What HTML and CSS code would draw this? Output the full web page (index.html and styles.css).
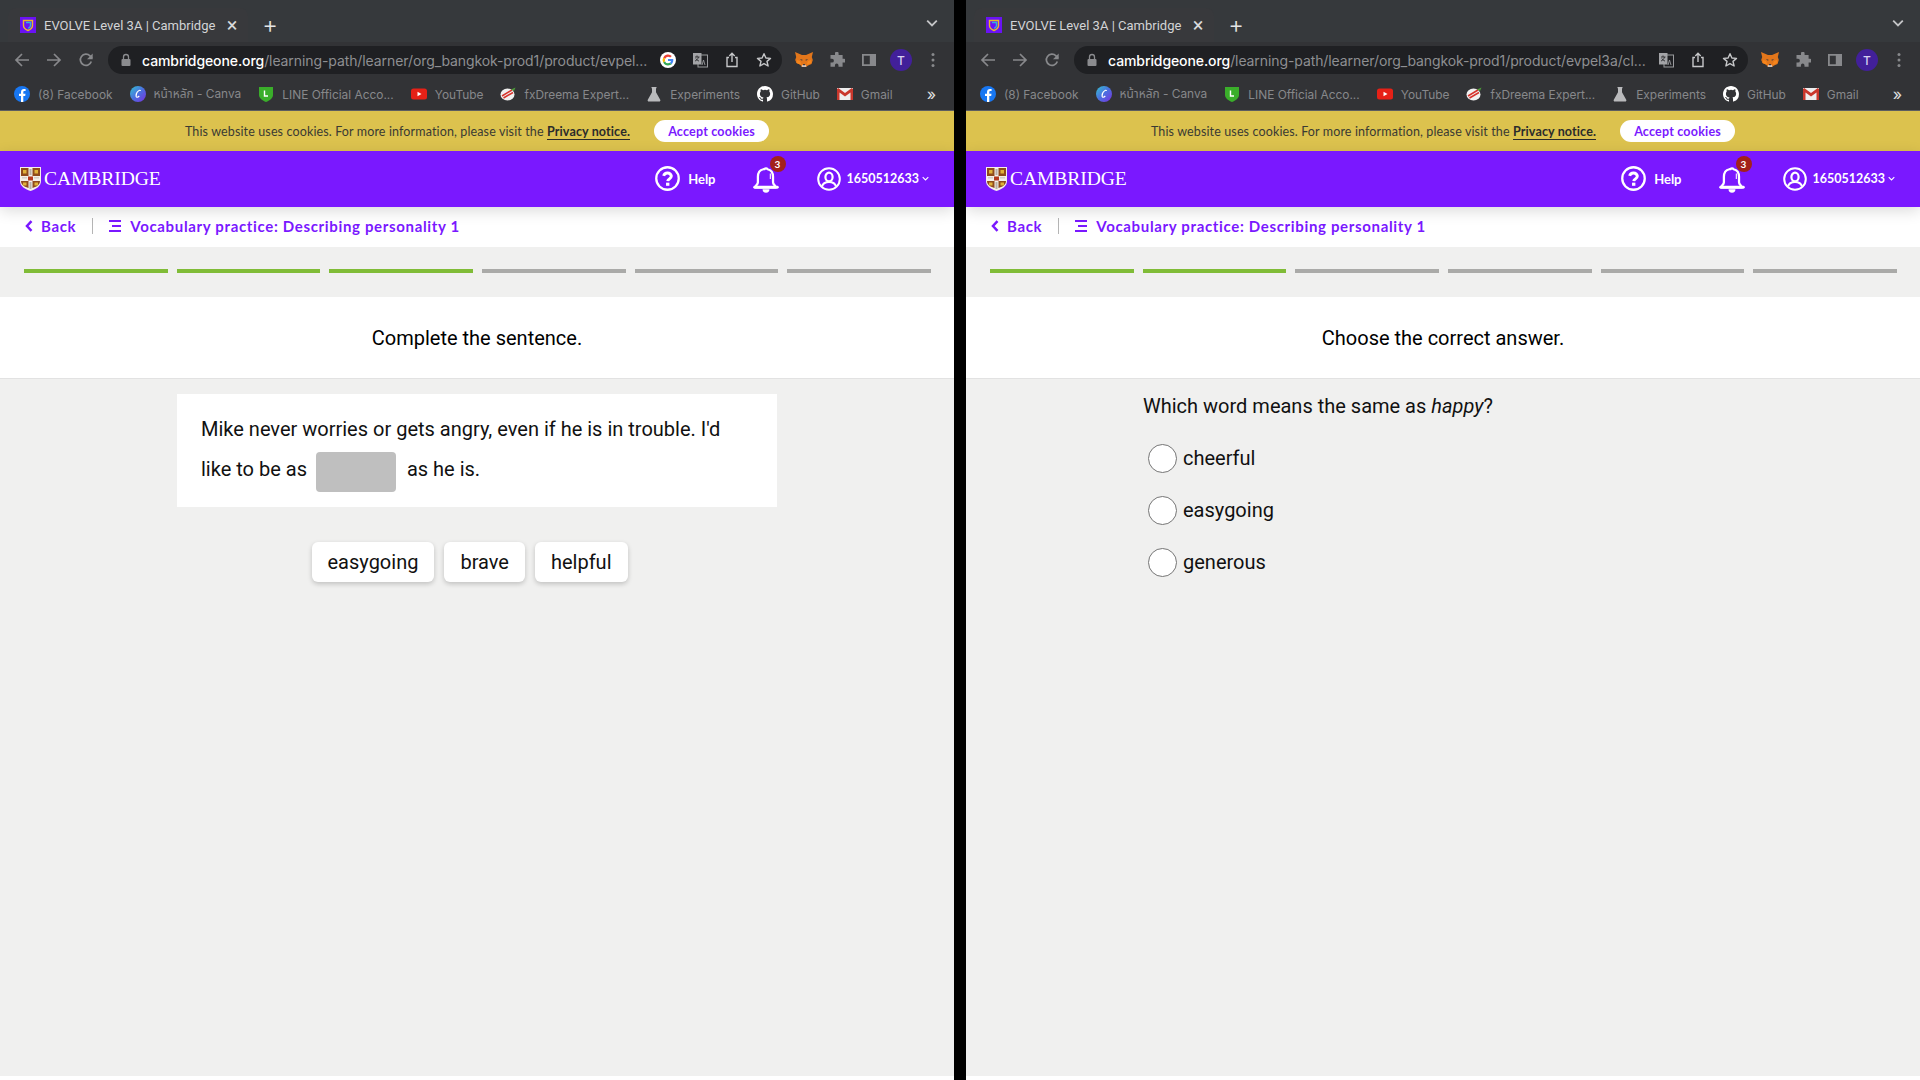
FILE: index.html
```html
<!DOCTYPE html>
<html lang="en">
<head>
<meta charset="utf-8">
<title>EVOLVE Level 3A | Cambridge One</title>
<link rel="stylesheet" href="styles.css">
</head>
<body>
<svg class="sprite" width="0" height="0" aria-hidden="true">
  <defs>
    <symbol id="favicon" viewBox="0 0 16 16">
      <rect width="16" height="16" fill="#6a12f5"/>
      <path d="M3.5 3.5h9v5c0 2.5-2 4-4.5 5-2.500-1-4.500-2.500-4.500-5z" fill="none" stroke="#e8b92c" stroke-width="1.400"/>
      <path d="M6 5.500h4.500v3c0 1.300-1 2.200-2.300 2.800" fill="none" stroke="#2fb6d8" stroke-width="1.400"/>
    </symbol>
    <symbol id="back" viewBox="0 0 16 16"><path d="M15 8H2M8 2 2 8l6 6" fill="none" stroke="currentColor" stroke-width="1.700"/></symbol>
    <symbol id="forward" viewBox="0 0 16 16"><path d="M1 8h13M8 2l6 6-6 6" fill="none" stroke="currentColor" stroke-width="1.700"/></symbol>
    <symbol id="reload" viewBox="0 0 16 16"><path d="M13.300 9.500A5.600 5.600 0 1 1 12 3.900L14 6" fill="none" stroke="currentColor" stroke-width="1.700"/><path d="M14.700 1.500v5.700H9z" fill="currentColor"/></symbol>
    <symbol id="lock" viewBox="0 0 12 14"><path d="M3.500 6V4a2.500 2.500 0 0 1 5 0v2" fill="none" stroke="currentColor" stroke-width="1.300"/><rect x="1.500" y="6" width="9" height="7" rx="1" fill="currentColor"/></symbol>
    <symbol id="google" viewBox="0 0 16 16">
      <circle cx="8" cy="8" r="8" fill="#fff"/>
      <path d="M8 4.700c.9 0 1.600.3 2.200.9l1.600-1.600A5.400 5.400 0 0 0 3.200 5.600l1.900 1.500A3.100 3.100 0 0 1 8 4.700z" fill="#e94235"/>
      <path d="M13.300 8.100c0-.4 0-.7-.1-1H8v2h3a2.600 2.600 0 0 1-1.100 1.700l1.800 1.400c1-1 1.600-2.400 1.600-4.100z" fill="#4285f4"/>
      <path d="M5.100 8.900 3.200 10.400A5.400 5.400 0 0 0 8 13.400c1.500 0 2.700-.5 3.700-1.200l-1.800-1.400c-.5.300-1.100.5-1.900.5a3.100 3.100 0 0 1-2.900-1.900z" fill="#34a853"/>
      <path d="M5.100 8.900a3.200 3.200 0 0 1 0-1.800L3.200 5.600a5.400 5.400 0 0 0 0 4.800z" fill="#fbbc05"/>
    </symbol>
    <symbol id="translate" viewBox="0 0 16 16">
      <rect x="6" y="3" width="9.500" height="12" fill="none" stroke="#9a9b9e" stroke-width="1"/>
      <path d="M1 1h8.500v11.500H1z" fill="#a3a4a7"/>
      <path d="M3 5h4.500M5 3.500V5M6.500 5c-.5 2-2 3.500-3.500 4M3.800 6.500c.7 1.200 1.800 2.100 3.200 2.600" stroke="#2a2b2e" stroke-width=".9" fill="none"/>
      <path d="M10 13l1.500-5 1.500 5" stroke="#9a9b9e" stroke-width=".9" fill="none"/>
    </symbol>
    <symbol id="share" viewBox="0 0 16 16"><path d="M5 5.500H3v9h10v-9h-2" fill="none" stroke="currentColor" stroke-width="1.400"/><path d="M8 10V1.500M5.300 4 8 1.300 10.700 4" fill="none" stroke="currentColor" stroke-width="1.400"/></symbol>
    <symbol id="star" viewBox="0 0 16 16"><path d="m8 1.700 1.900 4.300 4.600.4-3.500 3 1.100 4.600L8 11.600 3.900 14 5 9.400l-3.500-3 4.600-.4z" fill="none" stroke="currentColor" stroke-width="1.400" stroke-linejoin="round"/></symbol>
    <symbol id="fox" viewBox="0 0 18 16">
      <path d="M0 0l7 3h4l7-3-1.200 5 1 3-1.300 4-3.500 1.500L11 15H7l-2-2.500L1.500 11 .2 8l1-3z" fill="#e2761b"/>
      <path d="M2 8l3 1 1.500 3.500L5 12.500 1.500 11zM16 8l-3 1-1.500 3.500 1.500 0 3.500-1.500z" fill="#f6851b"/>
      <path d="M6.500 8.500 5 7l3 1zM11.500 8.500 13 7l-3 1z" fill="#233447"/>
      <path d="M7 13h4l.3 2H6.700z" fill="#d7c1b3"/>
      <path d="M8 12h2l-.3 1.200H8.300z" fill="#233447"/>
    </symbol>
    <symbol id="puzzle" viewBox="0 0 16 16"><path d="M6 1.500a1.800 1.800 0 0 1 3.600 0V3h4v3.800H15a1.900 1.900 0 0 1 0 3.800h-1.400v4.200H9.500V13.400a1.800 1.800 0 0 0-3.600 0v1.400H1.500v-4.200H3a1.900 1.900 0 0 0 0-3.800H1.500V3H6z" fill="currentColor"/></symbol>
    <symbol id="sidebar" viewBox="0 0 16 16"><path d="M1 2h14v12H1zM2.800 3.800v8.400h6V3.800z" fill="currentColor" fill-rule="evenodd"/></symbol>
    <symbol id="dots" viewBox="0 0 4 16"><circle cx="2" cy="2.500" r="1.500" fill="currentColor"/><circle cx="2" cy="8" r="1.500" fill="currentColor"/><circle cx="2" cy="13.500" r="1.500" fill="currentColor"/></symbol>
    <symbol id="fb" viewBox="0 0 16 16"><circle cx="8" cy="8" r="8" fill="#1877f2"/><path d="M7 16V10H5V7.700h2V6c0-2 1.200-3 3-3l1.600.1v2h-1c-1 0-1.300.5-1.300 1.200v1.400h2.200L11.200 10H9.300v6z" fill="#fff"/></symbol>
    <symbol id="canva" viewBox="0 0 16 16"><defs><linearGradient id="cv" x1="0" y1="0" x2="1" y2="1"><stop offset="0" stop-color="#35c3d0"/><stop offset=".5" stop-color="#4b6fe0"/><stop offset="1" stop-color="#7b2fe0"/></linearGradient></defs><circle cx="8" cy="8" r="8" fill="url(#cv)"/><path d="M10.500 5c-.2-1-1.200-.8-2-.1C7 6 5.800 8.500 6.100 10.300c.2 1.300 1.700 1.200 3.200-.3" fill="none" stroke="#fff" stroke-width="1.100"/></symbol>
    <symbol id="line" viewBox="0 0 14 16"><path d="M0 1h14v8c0 3.500-3.500 5.500-7 7-3.500-1.500-7-3.500-7-7z" fill="#3aae2a"/><path d="M5.500 4.500v5.500h3.500" fill="none" stroke="#fff" stroke-width="1.400"/></symbol>
    <symbol id="yt" viewBox="0 0 16 12"><rect width="16" height="11" y=".5" rx="2.500" fill="#e62117"/><path d="M6.500 3.700v4.600L10.500 6z" fill="#fff"/></symbol>
    <symbol id="fx" viewBox="0 0 16 16"><ellipse cx="7.500" cy="8.500" rx="7" ry="6" fill="#f1f1f1"/><path d="M2 10 12 4M3.500 12 13 6.500" stroke="#d6332c" stroke-width="1.500"/><path d="M11 3.500 15.500 1.500 14 5z" fill="#4c9a3a"/></symbol>
    <symbol id="flask" viewBox="0 0 14 16"><path d="M4.500 1h5v1.200H9v4L13.500 14.200 12.800 15.500H1.200L.5 14.200 5 6.200v-4h-.5z" fill="#b9babc"/></symbol>
    <symbol id="github" viewBox="0 0 16 16"><path fill="#fff" d="M8 0C3.580 0 0 3.580 0 8c0 3.540 2.290 6.530 5.470 7.590.4.070.55-.17.55-.38 0-.19-.01-.82-.01-1.490-2.010.37-2.530-.49-2.690-.94-.09-.23-.48-.94-.82-1.130-.28-.15-.68-.52-.01-.53.63-.01 1.080.58 1.230.82.720 1.210 1.870.870 2.330.660.070-.520.280-.870.510-1.070-1.780-.2-3.640-.89-3.640-3.950 0-.870.310-1.590.820-2.150-.08-.2-.36-1.020.08-2.120 0 0 .67-.21 2.200.82a7.420 7.420 0 0 1 4 0c1.530-1.040 2.200-.82 2.200-.82.44 1.100.16 1.920.08 2.120.51.560.82 1.270.82 2.150 0 3.070-1.870 3.750-3.650 3.950.29.250.54.730.54 1.480 0 1.070-.01 1.930-.01 2.200 0 .21.150.46.550.38A8.010 8.010 0 0 0 16 8c0-4.420-3.580-8-8-8z"/></symbol>
    <symbol id="gmail" viewBox="0 0 16 12"><rect width="16" height="12" fill="#eee"/><path d="M0 1v11h2.500V4.500L8 8.500l5.500-4V12H16V1l-1.200-1L8 5 1.200 0z" fill="#c9372c"/></symbol>
    <symbol id="shield" viewBox="0 0 21 24">
      <path d="M0 0h21v14c0 5-4.500 8-10.500 10C4.500 22 0 19 0 14z" fill="#f4efe9"/>
      <path d="M1 1h7.500v8H1zM12.500 1H20v8h-7.500zM1 14h7.500v7C5 20 1 18 1 14zM12.500 14H20c0 4-4 6-7.500 7z" fill="#8f4a1c"/>
      <path d="M3 3h3.500v3.500H3zM14.500 3H18v3.500h-3.500zM3 15.500h3.500v3H3zM14.500 15.500H18v3h-3.500z" fill="#e0b13a"/>
      <path d="M8 9.500h5V13.500H8z" fill="#b5391f"/>
      <path d="M9.500 2h2v6h-2zM2 10.500h5v.8H2zM14 10.500h5v.8h-5zM9.500 15h2v7h-2z" fill="#b8b0a8"/>
    </symbol>
    <symbol id="help" viewBox="0 0 24 24"><circle cx="12" cy="12" r="10.800" fill="none" stroke="currentColor" stroke-width="2.200"/><path d="M8.300 9.500a3.800 3.800 0 0 1 7.400.2c0 2.500-3.200 2.600-3.500 4.800" fill="none" stroke="currentColor" stroke-width="2.800"/><rect x="10.600" y="16" width="3.200" height="3" fill="currentColor"/></symbol>
    <symbol id="bell" viewBox="0 0 24 25"><path d="M10.600 3a1.600 1.600 0 0 1 2.800 0c3.700.8 5.100 3.700 5.100 7v5c0 2.300 2.500 3.300 2.500 4.800H2c0-1.500 2.500-2.500 2.500-4.800v-5c0-3.300 1.400-6.200 5.100-7z" fill="none" stroke="currentColor" stroke-width="2.100" stroke-linejoin="round"/><path d="M1.500 19.700h21" stroke="currentColor" stroke-width="2.600" stroke-linecap="round"/><path d="M8.800 21.500a3.200 3.200 0 0 0 6.400 0z" fill="currentColor"/><path d="M16 7v5" stroke="currentColor" stroke-width="1"/></symbol>
    <symbol id="user" viewBox="0 0 24 24"><circle cx="12" cy="12" r="10.800" fill="none" stroke="currentColor" stroke-width="2"/><ellipse cx="12" cy="10" rx="3.600" ry="4.300" fill="none" stroke="currentColor" stroke-width="2.200"/><path d="M5 19.500c1-3.500 3.500-4.500 7-4.500s6 1 7 4.500" fill="none" stroke="currentColor" stroke-width="2.200"/></symbol>
    <symbol id="chev" viewBox="0 0 10 6"><path d="M1 1l4 4 4-4" fill="none" stroke="currentColor" stroke-width="1.500"/></symbol>
    <symbol id="chevleft" viewBox="0 0 8 12"><path d="M6.500 1.200 2 6l4.500 4.800" fill="none" stroke="currentColor" stroke-width="2.500"/></symbol>
    <symbol id="list" viewBox="0 0 12 12"><path d="M0 1h12M3 6h9M0 11h12" stroke="currentColor" stroke-width="2"/></symbol>
  </defs>
</svg>

<main class="screen">
  <section class="pane">
    <div class="tabstrip">
      <div class="tab">
        <svg class="fav"><use href="#favicon"/></svg>
        <span class="tab-title">EVOLVE Level 3A | Cambridge</span>
        <span class="tab-close">×</span>
      </div>
      <span class="tab-new">+</span>
      <svg class="tab-menu"><use href="#chev"/></svg>
    </div>
    <div class="toolbar">
      <svg class="tool nav-first"><use href="#back"/></svg>
      <svg class="tool"><use href="#forward"/></svg>
      <svg class="tool"><use href="#reload"/></svg>
      <div class="omnibox">
        <svg class="lock"><use href="#lock"/></svg>
        <span class="url"><b>cambridgeone.org</b>/learning-path/learner/org_bangkok-prod1/product/evpel...</span>
        <svg class="omni-icon"><use href="#google"/></svg>
        <svg class="omni-icon"><use href="#translate"/></svg>
        <svg class="omni-icon"><use href="#share"/></svg>
        <svg class="omni-icon"><use href="#star"/></svg>
      </div>
      <svg class="ext fox"><use href="#fox"/></svg>
      <svg class="ext"><use href="#puzzle"/></svg>
      <svg class="ext"><use href="#sidebar"/></svg>
      <span class="avatar">T</span>
      <svg class="dots"><use href="#dots"/></svg>
    </div>
    <div class="bookmarks">
      <span class="bm"><svg><use href="#fb"/></svg>(8) Facebook</span>
      <span class="bm"><svg><use href="#canva"/></svg>หน้าหลัก - Canva</span>
      <span class="bm"><svg><use href="#line"/></svg>LINE Official Acco...</span>
      <span class="bm"><svg><use href="#yt"/></svg>YouTube</span>
      <span class="bm"><svg><use href="#fx"/></svg>fxDreema Expert...</span>
      <span class="bm"><svg><use href="#flask"/></svg>Experiments</span>
      <span class="bm"><svg><use href="#github"/></svg>GitHub</span>
      <span class="bm"><svg><use href="#gmail"/></svg>Gmail</span>
      <span class="bm-more">»</span>
    </div>
    <div class="cookie">
      <p>This website uses cookies. For more information, please visit the <a>Privacy notice.</a></p>
      <button class="accept">Accept cookies</button>
    </div>
    <header class="brand">
      <svg class="shield"><use href="#shield"/></svg>
      <span class="wordmark">CAMBRIDGE</span>
      <span class="help"><svg><use href="#help"/></svg>Help</span>
      <span class="bell"><svg><use href="#bell"/></svg><i class="badge">3</i></span>
      <span class="account"><svg><use href="#user"/></svg>1650512633<svg class="acc-chev"><use href="#chev"/></svg></span>
    </header>
    <nav class="crumbs">
      <svg class="c-back"><use href="#chevleft"/></svg><span class="c-label">Back</span>
      <span class="c-sep"></span>
      <svg class="c-list"><use href="#list"/></svg><span class="c-title">Vocabulary practice: Describing personality 1</span>
    </nav>
    <div class="progress">
      <span class="seg done"></span><span class="seg done"></span><span class="seg done"></span><span class="seg"></span><span class="seg"></span><span class="seg"></span>
    </div>
    <h1 class="prompt">Complete the sentence.</h1>
    <div class="content">
      <div class="column">
        <div class="card">Mike never worries or gets angry, even if he is in trouble. I'd like to be as <span class="blank"></span> as he is.</div>
        <div class="chips">
          <span class="chip">easygoing</span><span class="chip">brave</span><span class="chip">helpful</span>
        </div>
      </div>
    </div>
    <div class="foot"></div>
  </section>

  <section class="pane">
    <div class="tabstrip">
      <div class="tab">
        <svg class="fav"><use href="#favicon"/></svg>
        <span class="tab-title">EVOLVE Level 3A | Cambridge</span>
        <span class="tab-close">×</span>
      </div>
      <span class="tab-new">+</span>
      <svg class="tab-menu"><use href="#chev"/></svg>
    </div>
    <div class="toolbar">
      <svg class="tool nav-first"><use href="#back"/></svg>
      <svg class="tool"><use href="#forward"/></svg>
      <svg class="tool"><use href="#reload"/></svg>
      <div class="omnibox">
        <svg class="lock"><use href="#lock"/></svg>
        <span class="url"><b>cambridgeone.org</b>/learning-path/learner/org_bangkok-prod1/product/evpel3a/cl...</span>
        <svg class="omni-icon"><use href="#translate"/></svg>
        <svg class="omni-icon"><use href="#share"/></svg>
        <svg class="omni-icon"><use href="#star"/></svg>
      </div>
      <svg class="ext fox"><use href="#fox"/></svg>
      <svg class="ext"><use href="#puzzle"/></svg>
      <svg class="ext"><use href="#sidebar"/></svg>
      <span class="avatar">T</span>
      <svg class="dots"><use href="#dots"/></svg>
    </div>
    <div class="bookmarks">
      <span class="bm"><svg><use href="#fb"/></svg>(8) Facebook</span>
      <span class="bm"><svg><use href="#canva"/></svg>หน้าหลัก - Canva</span>
      <span class="bm"><svg><use href="#line"/></svg>LINE Official Acco...</span>
      <span class="bm"><svg><use href="#yt"/></svg>YouTube</span>
      <span class="bm"><svg><use href="#fx"/></svg>fxDreema Expert...</span>
      <span class="bm"><svg><use href="#flask"/></svg>Experiments</span>
      <span class="bm"><svg><use href="#github"/></svg>GitHub</span>
      <span class="bm"><svg><use href="#gmail"/></svg>Gmail</span>
      <span class="bm-more">»</span>
    </div>
    <div class="cookie">
      <p>This website uses cookies. For more information, please visit the <a>Privacy notice.</a></p>
      <button class="accept">Accept cookies</button>
    </div>
    <header class="brand">
      <svg class="shield"><use href="#shield"/></svg>
      <span class="wordmark">CAMBRIDGE</span>
      <span class="help"><svg><use href="#help"/></svg>Help</span>
      <span class="bell"><svg><use href="#bell"/></svg><i class="badge">3</i></span>
      <span class="account"><svg><use href="#user"/></svg>1650512633<svg class="acc-chev"><use href="#chev"/></svg></span>
    </header>
    <nav class="crumbs">
      <svg class="c-back"><use href="#chevleft"/></svg><span class="c-label">Back</span>
      <span class="c-sep"></span>
      <svg class="c-list"><use href="#list"/></svg><span class="c-title">Vocabulary practice: Describing personality 1</span>
    </nav>
    <div class="progress">
      <span class="seg done"></span><span class="seg done"></span><span class="seg"></span><span class="seg"></span><span class="seg"></span><span class="seg"></span>
    </div>
    <h1 class="prompt">Choose the correct answer.</h1>
    <div class="content">
      <div class="column">
        <p class="question">Which word means the same as <em>happy</em>?</p>
        <div class="options">
          <label class="option"><span class="radio"></span>cheerful</label>
          <label class="option"><span class="radio"></span>easygoing</label>
          <label class="option"><span class="radio"></span>generous</label>
        </div>
      </div>
    </div>
    <div class="foot"></div>
  </section>
</main>
</body>
</html>
```

FILE: styles.css
```css
* { box-sizing: border-box; }
html, body { margin: 0; height: 100%; }
body { background: #000; font-family: "Roboto", "Liberation Sans", sans-serif; overflow: hidden; }
.sprite { position: absolute; }
svg { display: block; }

.screen { display: grid; grid-template-columns: 954px 954px; column-gap: 12px; height: 1080px; }
.pane { display: flex; flex-direction: column; height: 1080px; min-width: 0; background: #f0f0ef; }

/* browser chrome */
.tabstrip { display: flex; align-items: flex-end; height: 42px; padding-left: 8px; background: #36393c; flex: none; }
.tab { display: flex; align-items: center; width: 240px; height: 34px; padding: 0 7px 0 12px; background: #38393c; border-radius: 8px 8px 0 0; color: #d3d4d6; font: 13px "Roboto", "Inter", sans-serif; }
.fav { width: 16px; height: 16px; flex: none; }
.tab-title { flex: 1; margin-left: 8px; white-space: nowrap; min-width: 0; }
.tab-close { width: 18px; margin-left: 3px; color: #d8d9db; font-size: 20px; line-height: 20px; text-align: center; }
.tab-new { width: 20px; height: 34px; margin-left: 12px; color: #e4e5e6; font: 300 24px/33px "Inter", sans-serif; text-align: center; }
.tab-menu { width: 12px; height: 8px; margin: 0 16px 15px auto; color: #c4c5c7; }

.toolbar { display: flex; align-items: center; height: 36px; padding: 0 14px 0 14px; background: #323336; color: #88898c; flex: none; }
.tool { width: 16px; height: 16px; margin-right: 16px; flex: none; }
.omnibox { display: flex; align-items: center; width: 674px; height: 28px; margin-left: -2px; padding: 0 10px 0 12px; border-radius: 14px; background: #1f2023; flex: none; }
.lock { width: 12px; height: 14px; color: #8b8c8f; flex: none; }
.url { flex: 1; min-width: 0; margin-left: 10px; color: #8e8f92; font: 14px "Inter", "Roboto", sans-serif; letter-spacing: -.09px; white-space: nowrap; }
.url b { color: #fff; font-weight: 500; }
.omni-icon { width: 16px; height: 16px; margin-left: 16px; color: #c6c7c9; flex: none; }
.omni-icon:first-of-type { margin-left: 0; }
.ext { width: 16px; height: 16px; margin-left: 16px; color: #88898c; flex: none; }
.ext.fox { width: 18px; margin-left: 13px; }
.avatar { display: flex; align-items: center; justify-content: center; width: 22px; height: 22px; margin-left: 13px; border-radius: 50%; background: #42209a; color: #d8d0f0; font: 500 12px "Inter", sans-serif; flex: none; }
.dots { width: 4px; height: 16px; margin-left: 19px; color: #88898c; flex: none; }

.bookmarks { display: flex; align-items: center; height: 33px; padding: 0 14px; background: #323336; border-bottom: 1px solid #5c5d60; color: #87888b; font: 11.900px "Inter", "Noto Sans Thai", "Roboto", sans-serif; flex: none; }
.bm { display: flex; align-items: center; gap: 8px; margin-right: 17px; white-space: nowrap; }
.bm svg { width: 16px; height: 16px; flex: none; }
.bm-more { margin-left: auto; margin-right: 4px; color: #e0e1e2; font-size: 16px; line-height: 16px; }

/* cookie bar */
.cookie { display: flex; align-items: center; justify-content: center; gap: 24px; height: 40px; background: #dcc24e; color: #3a3a33; font: 12.500px "Lato", "Noto Sans", sans-serif; letter-spacing: .13px; flex: none; }
.cookie p { margin: 0; }
.cookie a { color: #2b2b2b; font-weight: 700; border-bottom: 1px solid #2b2b2b; }
.accept { width: 115px; height: 22px; padding: 0; border: 0; border-radius: 11px; background: #fff; color: #7a18ff; font: 700 12.500px "Lato", sans-serif; letter-spacing: .2px; }

/* brand bar */
.brand { display: flex; align-items: center; height: 56px; padding: 0 20px 1px; background: #7a18ff; color: #fff; flex: none; position: relative; z-index: 1; box-shadow: 0 4px 14px rgba(0,0,0,.14); }
.shield { width: 21px; height: 24px; flex: none; }
.wordmark { margin-left: 3px; font: 19.600px "Liberation Serif", serif; letter-spacing: -.1px; }
.help { display: flex; align-items: center; gap: 8px; margin-left: auto; font: 700 13px "Lato", sans-serif; }
.help svg { width: 25px; height: 25px; }
.bell { position: relative; width: 26px; height: 26px; margin-left: 37px; }
.bell svg { width: 26px; height: 27px; }
.badge { position: absolute; top: -10px; right: -7px; width: 16px; height: 16px; border-radius: 50%; background: #a3211a; color: #fff; font: 700 10px/16px "Lato", sans-serif; text-align: center; }
.account { display: flex; align-items: center; margin-left: 38px; margin-right: 5px; font: 700 12.500px "Lato", sans-serif; }
.account > svg:first-child { width: 24px; height: 24px; margin-right: 6px; }
.acc-chev { width: 7px; height: 5px; margin-left: 3px; }

/* breadcrumb */
.crumbs { display: flex; align-items: center; height: 40px; padding: 0 0 2px 25px; background: #fff; color: #7a18ff; font: 700 15px "Lato", sans-serif; letter-spacing: .66px; flex: none; }
.c-back { width: 8px; height: 12px; flex: none; }
.c-label { margin-left: 8px; }
.c-sep { width: 1px; height: 16px; margin: 0 16px; background: #b5b5b5; }
.c-list { width: 12px; height: 12px; flex: none; }
.c-title { margin-left: 9px; }

/* progress */
.progress { display: grid; grid-template-columns: repeat(6, 1fr); column-gap: 9px; height: 50px; padding: 22px 23px 24px 24px; flex: none; }
.seg { height: 4px; background: #aaaaa8; }
.seg.done { background: #80bc37; }

/* prompt */
.prompt { display: flex; align-items: center; justify-content: center; height: 82px; margin: 0; background: #fff; border-bottom: 1px solid #e2e2e2; color: #000; font: 400 20px "Roboto", sans-serif; flex: none; }

/* question */
.content { flex: 1; display: flex; justify-content: center; padding-top: 15px; min-height: 0; }
.column { width: 600px; }
.card { padding: 15px 24px 15px; background: #fff; color: #111; font-size: 20px; line-height: 40px; }
.blank { display: inline-block; width: 80px; height: 40px; margin: 0 6px 0 4px; border-radius: 4px; background: #bfbfbf; vertical-align: -16px; }
.chips { display: flex; justify-content: center; gap: 10px; margin-top: 35px; padding-right: 15px; }
.chip { display: flex; align-items: center; height: 40px; padding: 0 16px; border-radius: 6px; background: #fff; box-shadow: 0 2px 5px rgba(0,0,0,.2); color: #111; font-size: 20px; }

.question { margin: 0; color: #111; font-size: 20px; line-height: 24px; }
.options { display: flex; flex-direction: column; gap: 22px; margin-top: 25px; padding-left: 5px; }
.option { display: flex; align-items: center; gap: 6px; height: 30px; color: #111; font-size: 20px; }
.radio { width: 29px; height: 29px; border: 1px solid #757575; border-radius: 50%; background: #fff; flex: none; }

.foot { height: 4px; background: #fff; flex: none; }
```
